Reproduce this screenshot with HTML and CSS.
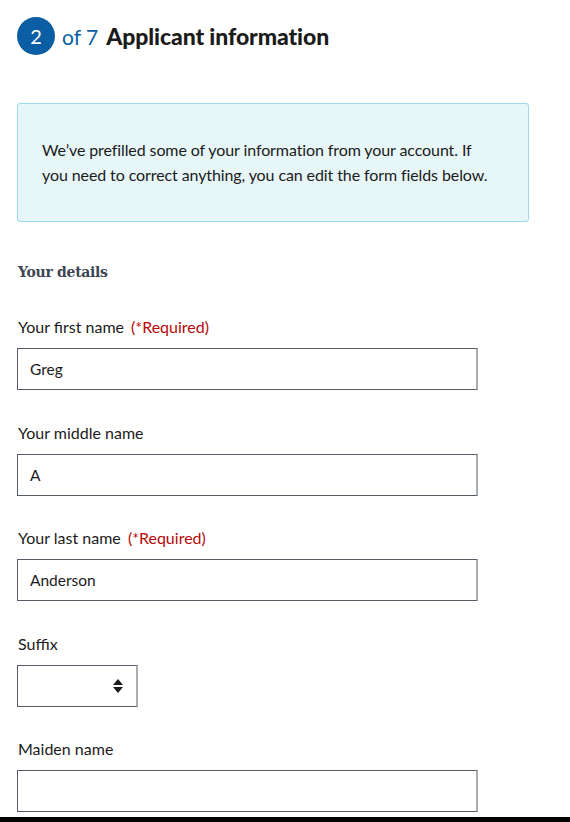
FILE: index.html
```html
<!DOCTYPE html>
<html>
<head>
<meta charset="utf-8">
<link rel="stylesheet" href="styles.css">
</head>
<body>
<div class="page">
  <h1 class="step">
    <span class="step-num">2</span>
    <span class="step-of">of 7</span>
    <span class="step-title">Applicant information</span>
  </h1>
  <div class="alert">
    <p>We’ve prefilled some of your information from your account. If you need to correct anything, you can edit the form fields below.</p>
  </div>
  <h3 class="section">Your details</h3>
  <div class="field">
    <label class="label">Your first name <span class="req">(*Required)</span></label>
    <div class="input">Greg</div>
  </div>
  <div class="field">
    <label class="label">Your middle name</label>
    <div class="input">A</div>
  </div>
  <div class="field">
    <label class="label">Your last name <span class="req">(*Required)</span></label>
    <div class="input">Anderson</div>
  </div>
  <div class="field">
    <label class="label">Suffix</label>
    <div class="select">
      <svg class="arrows" width="10" height="16" viewBox="0 0 10 16"><path d="M5 1 L10 7 L0 7 Z M0 9 L10 9 L5 15 Z" fill="#1b1b1b"/></svg>
    </div>
  </div>
  <div class="field">
    <label class="label">Maiden name</label>
    <div class="input"></div>
  </div>
</div>
</body>
</html>
```
FILE: styles.css
```css
html { background: #000; }
body {
  margin: 0;
  background: #fff;
  height: 817px;
  overflow: hidden;
  font-family: "Lato", "Open Sans", sans-serif;
  color: #1b1b1b;
}
.page {
  padding: 17px 0 0 17px;
  width: 512px;
}
.step {
  display: flex;
  align-items: center;
  margin: 0;
  height: 38px;
}
.step-num {
  width: 38px;
  height: 38px;
  border-radius: 50%;
  background: #0b5ea3;
  color: #fff;
  font-size: 20px;
  font-weight: 400;
  display: flex;
  align-items: center;
  justify-content: center;
}
.step-of {
  color: #0b5ea3;
  font-size: 21px;
  font-weight: 400;
  margin-left: 7px;
}
.step-title {
  font-size: 23px;
  font-weight: 900;
  margin-left: 8px;
  letter-spacing: -0.1px;
}
.alert {
  margin-top: 48px;
  background: #e7f6f8;
  border: 1px solid #99deea;
  border-radius: 3px;
  padding: 33px 40px 29px 24px;
  height: 55px;
}
.alert p {
  margin: 0;
  font-size: 16px;
  line-height: 25px;
  letter-spacing: -0.1px;
}
.section {
  margin: 40px 0 0 1px;
  font-family: "DejaVu Serif", serif;
  font-weight: 700;
  font-size: 14px;
  letter-spacing: -0.3px;
  color: #3d4551;
  height: 20px;
  line-height: 20px;
}
.field { margin-top: 34px; }
.field + .field { margin-top: 31.5px; }
.label {
  display: block;
  font-size: 16px;
  line-height: 22px;
  margin-left: 1px;
  margin-bottom: 10px;
}
.req { color: #b50909; margin-left: 3px; }
.input {
  width: 446px;
  height: 40px;
  border: 1px solid #565c65;
  border-right: 2px solid #a9aeb1;
  padding-left: 12px;
  font-size: 15.5px;
  line-height: 40px;
}
.select {
  width: 118px;
  height: 40px;
  border: 1px solid #565c65;
  border-right: 2px solid #a9aeb1;
  display: flex;
  align-items: center;
  justify-content: flex-end;
}
.arrows { margin-right: 13px; }
```
